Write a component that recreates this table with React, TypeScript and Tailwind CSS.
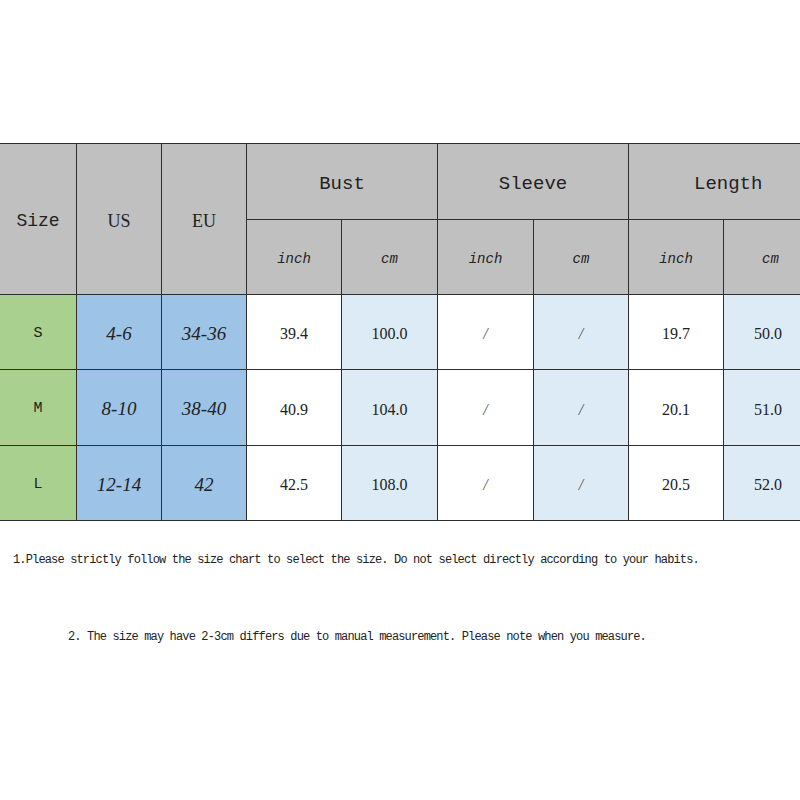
const rows = [
  { size: 'S', us: '4-6', eu: '34-36', bi: '39.4', bc: '100.0', si: '/', sc: '/', li: '19.7', lc: '50.0' },
  { size: 'M', us: '8-10', eu: '38-40', bi: '40.9', bc: '104.0', si: '/', sc: '/', li: '20.1', lc: '51.0' },
  { size: 'L', us: '12-14', eu: '42', bi: '42.5', bc: '108.0', si: '/', sc: '/', li: '20.5', lc: '52.0' },
]

// SimSun-like latin in the picture; Liberation Mono is closest at hand
const mono = "font-['Liberation_Mono','DejaVu_Sans_Mono',monospace]"
const serif = "font-['Liberation_Serif','DejaVu_Serif',serif]"
const cell = 'flex items-center justify-center text-[#222]'

export default function App() {
  return (
    <div className="w-[800px] h-[800px] bg-white overflow-hidden">
      <div className="pt-[143px]">
        <div className="grid w-[880px] grid-cols-[76px_84px_84px_94px_95px_95px_94px_94px_120px] grid-rows-[75px_74px_74px_75px_74px] gap-px bg-[#2e2e2e] border-y border-[#2e2e2e]">
          <div className={`${cell} ${mono} row-span-2 bg-[#c0c0c0] text-[18px] pt-[5px]`}>Size</div>
          <div className={`${cell} ${serif} row-span-2 bg-[#c0c0c0] text-[18px] pt-[5px]`}>US</div>
          <div className={`${cell} ${serif} row-span-2 bg-[#c0c0c0] text-[18px] pt-[5px]`}>EU</div>
          <div className={`${cell} ${mono} col-span-2 bg-[#c0c0c0] text-[19px] pt-[6px]`}>Bust</div>
          <div className={`${cell} ${mono} col-span-2 bg-[#c0c0c0] text-[19px] pt-[6px]`}>Sleeve</div>
          <div className={`${cell} ${mono} col-span-2 bg-[#c0c0c0] text-[19px] pt-[6px] justify-start pl-[65px]`}>Length</div>
          {['inch', 'cm', 'inch', 'cm', 'inch', 'cm'].map((u, i) => (
            <div key={i} className={`${cell} ${mono} bg-[#c0c0c0] text-[14px] italic pt-[5px] ${i === 5 ? 'justify-start pl-[38px]' : ''}`}>{u}</div>
          ))}
          {rows.map(r => (
            <div key={r.size} className="contents">
              <div className={`${cell} ${mono} bg-[#a9d08e] text-[15px] text-[#2a3320] pt-[4px]`}>{r.size}</div>
              <div className={`${cell} ${serif} bg-[#9dc3e6] text-[19px] italic pt-[4px]`}>{r.us}</div>
              <div className={`${cell} ${serif} bg-[#9dc3e6] text-[19px] italic pt-[4px]`}>{r.eu}</div>
              <div className={`${cell} ${serif} bg-white text-[16px] pt-[4px]`}>{r.bi}</div>
              <div className={`${cell} ${serif} bg-[#ddebf7] text-[16px] pt-[4px]`}>{r.bc}</div>
              <div className={`${cell} ${serif} bg-white text-[16px] text-[#555] italic pt-[4px]`}>{r.si}</div>
              <div className={`${cell} ${serif} bg-[#ddebf7] text-[16px] text-[#555] italic pt-[4px]`}>{r.sc}</div>
              <div className={`${cell} ${serif} bg-white text-[16px] pt-[4px]`}>{r.li}</div>
              <div className={`${cell} ${serif} bg-[#ddebf7] text-[16px] pt-[4px] justify-start pl-[30px]`}>{r.lc}</div>
            </div>
          ))}
        </div>
      </div>
      <p className={`${mono} mt-[30px] pl-[13px] text-[12px] tracking-[-0.85px] text-[#222] whitespace-nowrap`}>
        1.Please strictly follow the size chart to select the size. Do not select directly according to your habits.
      </p>
      <p className={`${mono} mt-[59px] pl-[68px] text-[12px] tracking-[-0.85px] text-[#222] whitespace-nowrap`}>
        2. The size may have 2-3cm differs due to manual measurement. Please note when you measure.
      </p>
    </div>
  )
}
